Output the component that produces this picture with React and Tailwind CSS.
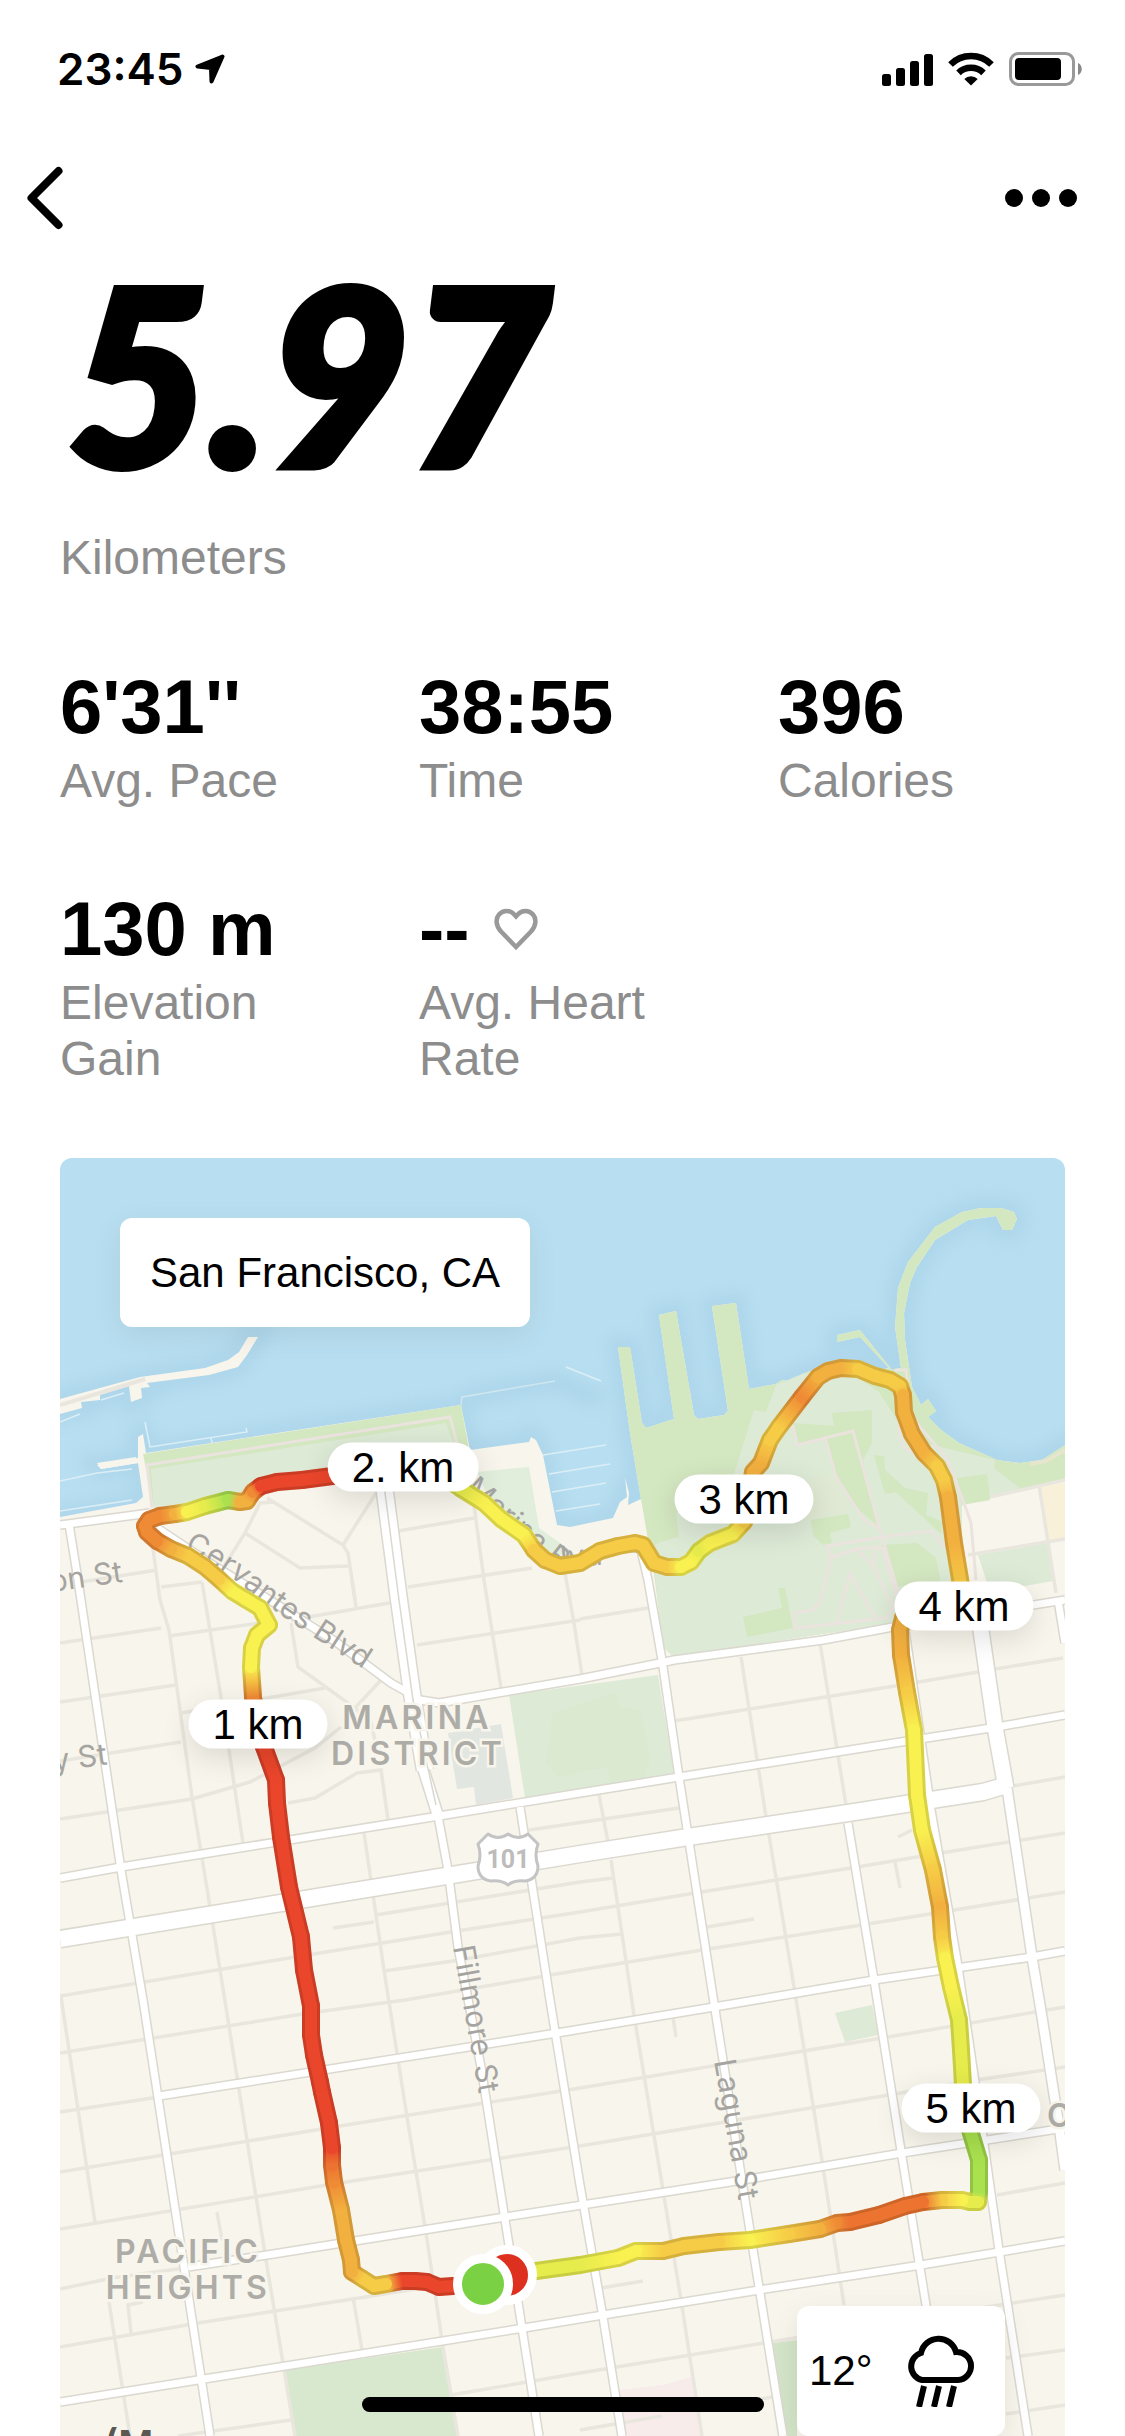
import React from 'react';

const STATS = [
  { value: "6'31''", label: 'Avg. Pace' },
  { value: '38:55', label: 'Time' },
  { value: '396', label: 'Calories' },
  { value: '130 m', label: 'Elevation Gain' },
  { value: '--', label: 'Avg. Heart Rate', heart: true },
];

// Map drawing space: x 60..1065, y 1158..2436
const MAP = { x: 60, y: 1158, w: 1005, h: 1278 };

const MARKERS = [
  { label: '1 km', x: 258, y: 1724 },
  { label: '2. km', x: 403, y: 1467 },
  { label: '3 km', x: 744, y: 1499 },
  { label: '4 km', x: 964, y: 1606 },
  { label: '5 km', x: 971, y: 2108 },
];

const RED = '#ea462b';
const RUST = '#ec7430';
const ORANGE = '#ef8a35';
const AMBER = '#f2b03f';
const GOLD = '#f6cb46';
const YELLOW = '#f9f150';
const CITRUS = '#e6ec4c';
const LIME = '#a9e14f';

const ROUTE = [
  [453, 2286, RED], [439, 2287, RED], [427, 2282, RED], [415, 2281, RED], [402, 2281, RED], [386, 2284, GOLD],
  [374, 2286, GOLD], [363, 2279, GOLD], [352, 2272, AMBER], [351, 2260, AMBER], [346, 2240, AMBER], [341, 2210, AMBER],
  [334, 2182, ORANGE], [332, 2165, RUST], [332, 2148, RED], [329, 2123, RED], [322, 2092, RED], [320, 2082, RED],
  [314, 2055, RED], [311, 2035, RED], [311, 2006, RED], [304, 1970, RED], [301, 1937, RED], [289, 1887, RED],
  [281, 1837, RED], [277, 1803, RED], [276, 1780, RED], [264, 1747, RED], [257, 1722, RUST], [253, 1697, ORANGE],
  [251, 1667, YELLOW], [252, 1648, YELLOW], [257, 1635, YELLOW], [269, 1625, YELLOW], [260, 1608, YELLOW],
  [245, 1599, YELLOW], [232, 1591, YELLOW], [219, 1579, GOLD], [205, 1567, GOLD], [188, 1556, GOLD],
  [171, 1549, AMBER], [157, 1541, ORANGE], [147, 1532, ORANGE], [145, 1526, ORANGE], [149, 1520, ORANGE],
  [160, 1516, ORANGE], [175, 1514, AMBER], [187, 1512, YELLOW], [205, 1506, CITRUS], [228, 1500, LIME],
  [240, 1502, AMBER], [247, 1501, AMBER], [253, 1492, ORANGE], [261, 1486, RED], [277, 1482, RED], [302, 1480, RED],
  [340, 1475, RED], [400, 1469, RED], [440, 1474, YELLOW], [460, 1488, CITRUS], [484, 1503, YELLOW],
  [501, 1519, YELLOW], [524, 1535, YELLOW], [534, 1550, GOLD], [545, 1560, GOLD], [560, 1566, GOLD], [580, 1563, GOLD],
  [600, 1551, GOLD], [618, 1546, GOLD], [635, 1543, GOLD], [643, 1545, GOLD], [648, 1553, GOLD], [654, 1563, GOLD],
  [667, 1567, GOLD], [681, 1567, YELLOW], [691, 1562, YELLOW], [699, 1551, CITRUS], [710, 1543, YELLOW],
  [733, 1534, YELLOW], [744, 1522, GOLD], [750, 1490, AMBER], [753, 1472, AMBER], [761, 1463, AMBER],
  [770, 1440, GOLD], [779, 1427, GOLD], [802, 1397, ORANGE], [818, 1377, AMBER], [828, 1371, AMBER],
  [841, 1368, AMBER], [858, 1369, GOLD], [875, 1376, GOLD], [890, 1380, GOLD], [900, 1386, GOLD],
  [903, 1395, AMBER], [904, 1412, AMBER], [912, 1434, AMBER], [924, 1453, AMBER], [937, 1466, GOLD],
  [944, 1480, GOLD], [948, 1497, AMBER], [954, 1543, AMBER], [961, 1585, GOLD], [930, 1607, AMBER], [903, 1618, AMBER],
  [900, 1630, AMBER], [901, 1655, AMBER], [907, 1692, GOLD], [914, 1730, YELLOW], [917, 1795, YELLOW],
  [922, 1830, YELLOW], [933, 1870, GOLD], [940, 1907, AMBER], [942, 1937, GOLD], [945, 1958, YELLOW],
  [951, 1987, YELLOW], [959, 2020, CITRUS], [961, 2050, CITRUS], [963, 2085, CITRUS], [970, 2130, LIME],
  [979, 2160, LIME], [979, 2192, LIME], [978, 2202, CITRUS], [970, 2202, CITRUS], [962, 2200, YELLOW],
  [942, 2200, GOLD], [923, 2202, RUST], [905, 2206, RUST], [879, 2215, RUST], [850, 2222, RUST], [837, 2223, ORANGE],
  [820, 2229, AMBER], [789, 2234, GOLD], [750, 2240, YELLOW], [719, 2242, GOLD], [684, 2246, GOLD],
  [663, 2251, GOLD], [636, 2251, YELLOW], [618, 2258, YELLOW], [580, 2265, CITRUS], [536, 2271, CITRUS], [507, 2275, CITRUS],
];

const LAND =
  'M60 1517 L136 1503 L143 1497 L138 1463 L101 1469 L97 1465 L138 1458 L138 1437 L143 1434 L146 1453 L461 1405 L470 1450 L529 1442 L531 1437 L536 1440 L543 1455 L557 1525 L570 1527 L613 1518 L620 1502 L627 1497 L625 1477 L629 1493 L628 1505 L641 1499 ' +
  'L630 1433 L618 1347 L630 1347 L642 1423 L646 1428 L674 1419 L659 1315 L676 1311 L694 1415 L698 1419 L724 1415 L728 1411 L712 1306 L736 1303 L749 1389 L776 1384 L782 1380 L792 1382 L802 1374 L825 1366 L880 1370 L889 1368 L860 1337 L837 1342 L837 1335 L860 1330 L892 1370 L901 1368 ' +
  'L895 1327 L898 1288 L908 1262 L935 1227 L962 1212 L981 1208 L1001 1208 L1014 1212 L1017 1219 L1012 1230 L1003 1230 L996 1216 L968 1220 L935 1240 L917 1267 L910 1283 L904 1313 L905 1340 L912 1387 L921 1405 L928 1399 L936 1411 L928 1417 L941 1430 L959 1443 L997 1460 L1020 1463 L1042 1460 L1065 1445 V2436 H60 Z';

const BREAKWATER =
  'M60 1399 L140 1377 L205 1368 L228 1360 L239 1352 L248 1337 L258 1337 L247 1355 L238 1367 L209 1375 L147 1383 L150 1387 L141 1388 L142 1398 L131 1402 L129 1386 L100 1395 L100 1400 L81 1402 L82 1408 L60 1414 Z';

const FORT_MASON =
  'M641 1499 L630 1433 L618 1347 L630 1347 L642 1423 L646 1428 L674 1419 L659 1315 L676 1311 L694 1415 L698 1419 L724 1415 L728 1411 L712 1306 L736 1303 L749 1389 L776 1384 L782 1380 L792 1382 L802 1374 L825 1366 L880 1370 L889 1368 L860 1337 L837 1342 L837 1335 L860 1330 L892 1370 L901 1368 ' +
  'L895 1327 L898 1288 L908 1262 L935 1227 L962 1212 L981 1208 L1001 1208 L1014 1212 L1017 1219 L1012 1230 L1003 1230 L996 1216 L968 1220 L935 1240 L917 1267 L910 1283 L904 1313 L905 1340 L912 1387 L921 1405 L928 1399 L936 1411 L928 1417 L941 1430 L959 1443 L997 1460 L1020 1463 L1042 1460 L1065 1445 ' +
  'V1480 L990 1495 L990 1500 L962 1505 L962 1610 L893 1623 L674 1657 L663 1647 L655 1580 Z';

const MEADOW =
  'M766 1412 L776 1385 L802 1374 L841 1366 L879 1392 L899 1423 L915 1440 L941 1447 L995 1460 L994 1468 L1020 1488 L990 1497 L987 1474 L957 1478 L962 1505 L962 1610 L893 1623 L674 1657 L663 1647 L652 1547 L660 1542 L679 1537 L676 1513 L733 1477 L754 1410 Z';

const GROVES = [
  'M832 1413 L872 1410 L872 1443 L863 1460 L877 1525 L851 1503 L835 1473 L825 1437 L797 1445 L793 1423 L834 1426 Z',
  'M874 1455 L884 1456 L885 1470 L905 1488 L928 1493 L926 1515 L943 1522 L941 1534 L896 1492 L885 1494 Z',
  'M882 1545 L917 1543 L936 1558 L941 1583 L896 1587 Z',
  'M811 1520 L848 1514 L851 1527 L830 1533 L832 1543 L823 1545 L813 1535 Z',
  'M743 1617 L782 1608 L778 1588 L785 1588 L793 1628 L747 1637 Z',
];

const FOOTPATHS = [
  'M793 1425 L797 1445 L853 1431 L882 1537 L898 1592',
  'M825 1437 L836 1477 L864 1520 L878 1528',
  'M831 1558 L827 1546 L882 1537 L931 1531 L945 1548',
  'M881 1547 L856 1549 L831 1558 L820 1602 L813 1610 L794 1613 L795 1628 L886 1618 L898 1600 L882 1547',
  'M837 1623 L850 1573 L875 1618',
  'M856 1549 L873 1565 L892 1605 M875 1549 L873 1565',
  'M895 1370 H906 L912 1417 L948 1460 L964 1503 L971 1523 L976 1580',
  'M899 1425 L902 1446 L913 1453',
  'M152 1508 L147 1465 L450 1417 L460 1455',
];

const SIDE_STREETS = [
  'M60 1643 L161 1628 M169 1636 L260 1623 M291 1620 L395 1602 M60 1702 L176 1685 M60 1761 L181 1742',
  'M60 1819 L192 1799 L250 1782 L315 1748 L341 1727 M181 1713 L325 1688',
  'M288 1803 L315 1798 L357 1773 L381 1770 L388 1820 M291 1623 L298 1667 L355 1708 L371 1723 L376 1745 M381 1680 L355 1708',
  'M60 1996 L295 1957 L457 1931 L580 1912 L695 1893 L851 1868 L941 1853 L1065 1833',
  'M60 2053 L309 2013 L405 2000 L580 1970 L702 1950 L868 1924 L1065 1892',
  'M376 1915 L580 1882 L613 1878 M333 1928 L374 1922 M384 1971 L460 1960 L580 1938 L622 1934 M529 1830 L679 1808 M707 1927 L754 1919',
  'M60 2112 L159 2097 M60 2172 L340 2126 L580 2088 L882 2038 L1065 2007',
  'M60 2229 L333 2184 L580 2146 L889 2095 L976 2080 L1065 2067',
  'M60 2289 L112 2278 L185 2268 M60 2347 L198 2323 L353 2299 L453 2283',
  'M178 2436 L291 2420 M451 2395 L580 2373 L764 2343 L1006 2304 L1065 2295',
  'M997 2195 L1065 2183 M1006 2358 L1065 2350 M1006 2414 L1065 2405 M580 2430 L662 2416 M754 2400 L773 2397 M601 2288 L643 2281',
  'M674 1721 L895 1686 L978 1672 M995 1669 L1063 1658 M1013 1786 L1065 1777',
  'M580 1619 L648 1608 M417 1645 L580 1620 M398 1531 L474 1518 M408 1587 L532 1568',
  'M148 1513 L160 1600 L169 1630 L192 1797 L210 1907 L228 2020 L247 2140 L266 2260 L283 2363 L295 2436',
  'M202 1582 L221 1697 L243 1843 M364 1833 L384 1970 L407 2117 L426 2233 L443 2347 L458 2436',
  'M61 1997 L95 2222 M109 2302 L130 2436 M143 2302 L128 2305 L131 2333 M217 2212 L222 2240 M353 2297 L362 2350',
  'M599 1795 L608 1842 M611 1860 L634 2015 L663 2190 L681 2300 L702 2436',
  'M741 1657 L766 1817 L795 1993 L823 2167 L844 2305 M820 1643 L846 1805',
  'M895 1862 L900 1888 M898 1837 L912 1830 M673 2017 L676 2037',
  'M472 1490 L484 1580 L501 1688 M565 1573 L574 1623 L582 1675 M352 1580 L356 1607',
  'M267 1498 L343 1545 L348 1553 L355 1600 M376 1493 L343 1545 M275 1502 L260 1503 L245 1533 L225 1565 M245 1533 L300 1568 L348 1566',
  'M81 1582 L157 1570 M161 1587 L202 1582',
  'M990 1497 L1065 1480 M1039 1485 L1056 1593 M968 1555 L1065 1539',
];

const MAIN_STREETS = [
  'M69 1524 L78 1580 L121 1870 L143 2000 L210 2436',
  'M438 1816 L448 1870 L458 1947 L481 2067 L539 2436',
  'M520 1807 L550 2000 L580 2185 L603 2317 L622 2436',
  'M641 1550 L648 1580 L662 1660 L679 1777 L714 2003 L743 2187 L759 2287 L783 2436',
  'M848 1823 L874 1980 L902 2157 L926 2305 L946 2436',
  'M905 1630 L931 1810 L957 1960 L983 2137 L999 2250 L1028 2436',
  'M1058 1600 L1065 1643',
  'M60 1525 L150 1513',
  'M157 1528 L205 1560 L281 1607 L336 1642 L391 1683 L416 1697',
  'M414 1699 L439 1703 L580 1679 L660 1663 L674 1660 L823 1640 L893 1627 L1065 1600',
  'M60 1878 L121 1867 L439 1816 L580 1793 L679 1777 L837 1752 L997 1727 L1065 1715',
  'M159 2096 L557 2033 L714 2007 L874 1980 L1032 1957 L1065 1951',
  'M188 2267 L267 2255 L505 2217 L743 2180 L902 2153 L1065 2128',
  'M60 2402 L204 2379 L524 2328 L603 2315 L759 2290 L921 2265 L1065 2241',
];

const WIDE_STREETS = [
  { d: 'M384 1485 L399 1600 L413 1700 L425 1770', w: 16 },
  { d: 'M422 1765 L438 1816', w: 10 },
  { d: 'M978 1610 L995 1727 L1006 1788', w: 15 },
  { d: 'M1007 1788 L1032 1957 L1042 2017 L1060 2133 L1065 2170', w: 9 },
  { d: 'M60 1939 L281 1903 L446 1876 L580 1854 L688 1837 L848 1813 L983 1792 L1007 1785', w: 16 },
];

const DOCK_LINES = [
  'M60 1422 L80 1414 M60 1481 L97 1473 L132 1469 M60 1511 L132 1500',
  'M145 1422 L150 1447 L247 1432 L246 1428 M211 1438 L212 1443 M101 1400 L124 1393',
  'M566 1367 L601 1381 M543 1455 L606 1445 M549 1474 L610 1464 M552 1492 L606 1483 M556 1511 L600 1504',
];

const SignalIcon = () => (
  <svg width="51" height="33" viewBox="0 0 51 33" aria-hidden="true">
    <rect x="0" y="21" width="9" height="12" rx="2.5" />
    <rect x="14" y="15" width="9" height="18" rx="2.5" />
    <rect x="28" y="8" width="9" height="25" rx="2.5" />
    <rect x="42" y="1" width="9" height="32" rx="2.5" />
  </svg>
);

const WifiIcon = () => (
  <svg width="46" height="34" viewBox="0 0 46 34" aria-hidden="true">
    <g fill="none" stroke="#000" strokeWidth="6.5">
      <path d="M2.5 12.5 A29 29 0 0 1 43.5 12.5" />
      <path d="M10.5 20.8 A18 18 0 0 1 35.5 20.8" />
    </g>
    <path d="M16.3 27 A9.8 9.8 0 0 1 29.7 27 L23 33.5 Z" />
  </svg>
);

const BatteryIcon = () => (
  <svg width="73" height="34" viewBox="0 0 73 34" aria-hidden="true">
    <rect x="1.5" y="1.5" width="63" height="31" rx="8" fill="none" stroke="#999" strokeWidth="3" />
    <rect x="6" y="6" width="46" height="22" rx="4" />
    <path d="M69 11 C74 13 74 21 69 23 Z" fill="#888" />
  </svg>
);

const HeartIcon = () => (
  <svg width="44" height="42" viewBox="0 0 44 42" aria-hidden="true">
    <path
      d="M22 39 L7 23.5 C1.5 17.5 1.5 10.5 5 6.5 C9 1.8 16 1.8 20 6.3 L22 8.5 L24 6.3 C28 1.8 35 1.8 39 6.5 C42.5 10.5 42.5 17.5 37 23.5 Z"
      fill="none"
      stroke="#999"
      strokeWidth="4.5"
    />
  </svg>
);

const RainIcon = () => (
  <svg width="70" height="72" viewBox="0 0 70 72" fill="none" stroke="#000" strokeWidth="6" aria-hidden="true">
    <path d="M17 45 A14 14 0 0 1 16 18 A18 18 0 0 1 51 17 A14 14 0 0 1 53 45 Z" />
    <path d="M19 51 L14 72 M34 51 L29 72 M49 51 L44 72" />
  </svg>
);

const Stat = ({ value, label, heart }) => (
  <div className="flex flex-col gap-1">
    <div className="flex items-center gap-6">
      <span className="text-[76px] leading-[84px] font-bold">{value}</span>
      {heart && <HeartIcon />}
    </div>
    <span className="text-5xl leading-14 text-[#8d8d8d]">{label}</span>
  </div>
);

const RouteLine = () => {
  const segments = ROUTE.slice(1).map((p, i) => ({ a: ROUTE[i], b: p, id: `seg-${i}` }));
  const outline = ROUTE.map(([x, y]) => `${x},${y}`).join(' ');
  const stroke = (width) =>
    segments.map(({ a, b, id }) => (
      <path key={id} d={`M${a[0]} ${a[1]} L${b[0]} ${b[1]}`} stroke={`url(#${id})`} strokeWidth={width} />
    ));

  return (
    <g fill="none" strokeLinecap="round" strokeLinejoin="round">
      <defs>
        {segments.map(({ a, b, id }) => (
          <linearGradient key={id} id={id} gradientUnits="userSpaceOnUse" x1={a[0]} y1={a[1]} x2={b[0]} y2={b[1]}>
            <stop offset="0" stopColor={a[2]} />
            <stop offset="1" stopColor={b[2]} />
          </linearGradient>
        ))}
      </defs>
      {stroke(18)}
      <polyline points={outline} stroke="#000" strokeOpacity="0.13" strokeWidth="18" />
      {stroke(12)}
    </g>
  );
};

const StreetLabels = () => (
  <g fill="#a5a4a0" className="font-['Inter',sans-serif] text-[30px]">
    <defs>
      <path id="cervantes" d="M184 1551 Q210 1560 250 1592 T400 1692" />
      <path id="marina-blvd" d="M464 1490 Q510 1532 556 1568 L640 1562" />
    </defs>
    <text><textPath href="#cervantes">Cervantes Blvd</textPath></text>
    <text><textPath href="#marina-blvd">Marina Blvd</textPath></text>
    <text transform="translate(51 1592) rotate(-8)">on St</text>
    <text transform="translate(54 1771) rotate(-7)">y St</text>
    <text transform="translate(453 1947) rotate(80)">Fillmore St</text>
    <text transform="translate(714 2061) rotate(80)">Laguna St</text>
    <g
      fill="#adaca7"
      stroke="#f8f5ec"
      strokeWidth="5"
      paintOrder="stroke"
      textAnchor="middle"
      className="text-[32px] font-semibold tracking-widest"
    >
      <text x="417" y="1729">MARINA</text>
      <text x="418" y="1765">DISTRICT</text>
      <text x="188" y="2263">PACIFIC</text>
      <text x="188" y="2299">HEIGHTS</text>
      <text x="1061" y="2127">O</text>
    </g>
    <text x="104" y="2458" fill="#5b5854" className="text-[38px] font-semibold">(M</text>
  </g>
);

const MapDrawing = () => (
  <svg
    className="block w-full"
    viewBox={`${MAP.x} ${MAP.y} ${MAP.w} ${MAP.h}`}
    role="img"
    aria-label="Running route through the Marina District"
  >
    <defs>
      <filter id="shore" x="-10%" y="-10%" width="120%" height="120%">
        <feGaussianBlur stdDeviation="8" />
      </filter>
    </defs>
    <rect x="60" y="1158" width="1005" height="1278" fill="#b8dff1" />
    <g filter="url(#shore)" fill="none" stroke="#acd4e9" strokeWidth="22" opacity="0.8">
      <path d={LAND} />
      <path d={BREAKWATER} />
      <path d="M463 1397 L555 1381 L601 1400" />
    </g>
    <path d={LAND} fill="#f8f5ec" />
    <path d={BREAKWATER} fill="#f8f5ec" />
    <path d="M60 1405 L145 1379" stroke="#e9e6de" strokeWidth="4" />
    <path d="M97 1463 L101 1469 L138 1463 L136 1457 Z" fill="#f8f5ec" />
    {DOCK_LINES.map(d => <path key={d} d={d} fill="none" stroke="#dceef5" strokeWidth="1.5" />)}
    <path d="M461 1405 L462 1397 L555 1381" fill="none" stroke="#cfe6f0" strokeWidth="1.5" />

    {/* Parks and blocks */}
    <path d="M143 1454 L461 1405 L470 1455 L154 1508 Z" fill="#d3e7c1" />
    <path d="M151 1469 L446 1423 L460 1460 L154 1508 Z" fill="#ddead6" />
    <path d="M477 1472 L529 1467 L539 1528 L574 1553 L550 1556 L488 1497 Z" fill="#e1eedb" />
    <path d={FORT_MASON} fill="#d3e7c1" />
    <path d={MEADOW} fill="#ddead6" />
    <path d="M812 1477 Q835 1465 843 1495 L850 1512 L815 1518 Q775 1525 790 1495 Z" fill="#e0e9d3" />
    {GROVES.map(d => <path key={d} d={d} fill="#d3e7c1" />)}
    <path d="M978 1555 L1049 1543 L1053 1581 L990 1592 Z" fill="#ddead6" />
    <path d="M1040 1487 L1065 1483 V1538 L1049 1542 Z" fill="#f8f0d8" />
    <path d="M1030 1464 L1046 1461 L1065 1450" fill="none" stroke="#e6e6ce" strokeWidth="4" />
    <path d="M448 1733 L501 1724 L513 1798 L476 1805 L474 1787 L457 1789 Z" fill="#e1e6e0" />
    <path d="M509 1695 L658 1675 L674 1773 L525 1798 Z" fill="#ddead6" />
    <path d="M553 1713 L616 1692 L618 1707 L641 1710 L650 1760 L643 1780 L610 1783 L608 1767 L558 1777 L546 1763 Z" fill="#dae9cf" />
    <path d="M835 2013 L872 2005 L878 2035 L845 2042 Z" fill="#ddead6" />
    <path d="M285 2370 L443 2347 L458 2436 H295 Z" fill="#d8e8cf" />
    <path d="M773 2343 L797 2340 V2436 H787 Z" fill="#d3e4c8" />
    <path d="M618 2390 L663 2385 L691 2377 L702 2436 H625 Z" fill="#f8ecea" />
    <g fill="none" stroke="#eae3de" strokeWidth="3">
      {FOOTPATHS.map(d => <path key={d} d={d} />)}
    </g>

    {/* Streets: side streets first, then the cased white ones */}
    <g fill="none" stroke="#e9e6de" strokeWidth="3.5">
      {SIDE_STREETS.map(d => <path key={d} d={d} />)}
    </g>
    <g fill="none" stroke="#dad8cf" strokeLinejoin="round">
      {MAIN_STREETS.map(d => <path key={d} d={d} strokeWidth="10" />)}
      {WIDE_STREETS.map(({ d, w }) => <path key={d} d={d} strokeWidth={w + 3} />)}
    </g>
    <g fill="none" stroke="#fff" strokeLinejoin="round">
      {MAIN_STREETS.map(d => <path key={d} d={d} strokeWidth="7" />)}
      {WIDE_STREETS.map(({ d, w }) => <path key={d} d={d} strokeWidth={w} />)}
    </g>
    <path d="M384 1485 L399 1600 L413 1700 L436 1805" fill="none" stroke="#dad8cf" strokeWidth="1.5" />

    <StreetLabels />

    {/* US 101 shield */}
    <path
      d="M488 1834 Q498 1841 508 1834 Q518 1841 528 1834 L538 1844 Q534 1855 538 1866 Q538 1879 525 1881 Q514 1880 508 1885 Q502 1880 491 1881 Q478 1879 478 1866 Q482 1855 478 1844 Z"
      fill="#fff"
      stroke="#c4c4c4"
      strokeWidth="3"
      strokeLinejoin="round"
    />
    <text x="508" y="1868" textAnchor="middle" fill="#bcbcbc" className="font-['Roboto',sans-serif] text-[25px] font-bold">
      101
    </text>

    <RouteLine />
    <g stroke="#fff" strokeWidth="9">
      <circle cx="507" cy="2275" r="25.5" fill="#dd301f" />
      <circle cx="483" cy="2284" r="25.5" fill="#7ad143" />
    </g>
  </svg>
);

const Marker = ({ label, x, y }) => (
  <span
    className="absolute -translate-x-1/2 -translate-y-1/2 rounded-full bg-white px-6 text-[42px] leading-[49px] whitespace-nowrap shadow-[0_8px_30px_rgba(0,0,0,0.12)]"
    style={{ left: `${((x - MAP.x) / MAP.w) * 100}%`, top: `${((y - MAP.y) / MAP.h) * 100}%` }}
  >
    {label}
  </span>
);

export default function App() {
  return (
    <div className="relative min-h-screen bg-white font-['Liberation_Sans',Arial,sans-serif] text-black">
      <div className="flex h-[138px] items-center justify-between pr-[43px] pl-[57px]">
        <div className="flex items-center gap-3">
          <span className="font-['Inter',sans-serif] text-[44px] leading-none font-semibold">23:45</span>
          <svg width="30" height="30" viewBox="0 0 30 30" aria-hidden="true">
            <path
              d="M27.5 2.5 L2.5 12.5 L16 14 L16.5 27.5 Z"
              stroke="#000"
              strokeWidth="4"
              strokeLinejoin="round"
            />
          </svg>
        </div>
        <div className="flex items-center gap-[15px]">
          <SignalIcon />
          <WifiIcon />
          <BatteryIcon />
        </div>
      </div>

      <nav className="flex h-[120px] items-center justify-between pr-[48px] pl-[27px]">
        <button type="button" aria-label="Back">
          <svg width="36" height="64" viewBox="0 0 36 64" fill="none" aria-hidden="true">
            <path d="M31.5 5 L4.5 32 L31.5 59" stroke="#000" strokeWidth="8" strokeLinecap="round" strokeLinejoin="round" />
          </svg>
        </button>
        <button type="button" aria-label="More options" className="flex gap-[9px]">
          <span className="size-[18px] rounded-full bg-black" />
          <span className="size-[18px] rounded-full bg-black" />
          <span className="size-[18px] rounded-full bg-black" />
        </button>
      </nav>

      <main className="px-[60px]">
        <h1 className="pl-2 font-['Lato',sans-serif] text-[244px] leading-[228px] font-black italic [-webkit-text-stroke:8px_black]">
          5.97
        </h1>
        <p className="mt-11 text-5xl leading-14 text-[#8d8d8d]">Kilometers</p>

        <section className="mt-[79px] grid grid-cols-3 gap-x-[72px] gap-y-[78px]">
          {STATS.map(s => <Stat key={s.label} {...s} />)}
        </section>

        <section className="relative mt-[71px] overflow-hidden rounded-t-xl">
          <MapDrawing />
          {MARKERS.map(m => <Marker key={m.label} {...m} />)}
          <div className="absolute top-[60px] left-[60px] rounded-xl bg-white px-[30px] py-[30px] text-[42px] leading-[49px] shadow-[0_8px_30px_rgba(0,0,0,0.08)]">
            San Francisco, CA
          </div>
          <div className="absolute right-[60px] bottom-0 flex h-[130px] w-[208px] items-center justify-between rounded-xl bg-white pr-[30px] pl-3 shadow-[0_8px_30px_rgba(0,0,0,0.08)]">
            <span className="text-[42px] leading-none">12°</span>
            <RainIcon />
          </div>
        </section>
      </main>

      <div className="fixed bottom-6 left-1/2 h-[15px] w-[402px] -translate-x-1/2 rounded-full bg-black" />
    </div>
  );
}
